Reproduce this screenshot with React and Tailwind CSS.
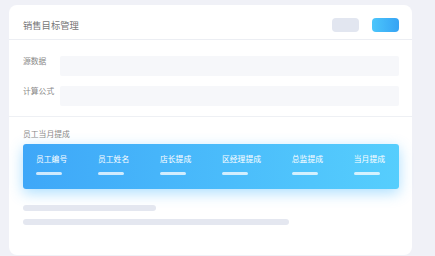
const COLUMNS = ['员工编号', '员工姓名', '店长提成', '区经理提成', '总监提成', '当月提成']

const FIELDS = ['源数据', '计算公式']

export default function App() {
  return (
    <div
      className="w-[435px] h-[256px] bg-[#f0f1f7] pt-[5px] pl-[9px] overflow-hidden"
      style={{ fontFamily: '"Noto Sans CJK SC", "Noto Sans", sans-serif' }}
    >
      <div className="w-[403px] h-[250px] bg-white rounded-[8px] flex flex-col">
        {/* header */}
        <div className="h-[35px] pt-[6px] pl-[14px] pr-[13px] flex items-center justify-between border-b border-[#eceef3]">
          <span className="text-[9.3px] leading-[14px] text-[#777]">销售目标管理</span>
          <div className="flex gap-[13px]">
            <div className="w-[27px] h-[14px] rounded-[4px] bg-[#e2e6f0]" />
            <div className="w-[27px] h-[14px] rounded-[4px] bg-gradient-to-r from-[#4cc6fb] to-[#36a3f4]" />
          </div>
        </div>

        {/* form */}
        <div className="pt-[16px] pb-[10px] pl-[14px] pr-[13px] flex flex-col gap-[10px] border-b border-[#eef0f4]">
          {FIELDS.map((f) => (
            <div key={f} className="flex items-start">
              <span className="w-[37px] text-[7.8px] leading-[10px] text-[#888]">{f}</span>
              <div className="flex-1 h-[20px] bg-[#f6f7fa] rounded-[2px]" />
            </div>
          ))}
        </div>

        {/* commission table */}
        <div className="pt-[12px] pl-[14px] pr-[13px]">
          <div className="text-[7.8px] leading-[10px] text-[#888]">员工当月提成</div>
          <div className="mt-[5px] h-[45px] rounded-[3px] bg-gradient-to-r from-[#3ea7f8] to-[#56cefd] shadow-[0_4px_14px_rgba(70,185,255,0.45)] pt-[10px] pl-[13px] pr-[14px] flex justify-between">
            {COLUMNS.map((c) => (
              <div key={c} className="flex flex-col">
                <span className="text-[7.8px] leading-[10px] text-white whitespace-nowrap">{c}</span>
                <div className="mt-[8px] w-[26px] h-[3px] rounded-full bg-white/75" />
              </div>
            ))}
          </div>
          <div className="mt-[16px] w-[133px] h-[6px] rounded-full bg-[#e4e7f0]" />
          <div className="mt-[8px] w-[266px] h-[6px] rounded-full bg-[#e4e7f0]" />
        </div>
      </div>
    </div>
  )
}
